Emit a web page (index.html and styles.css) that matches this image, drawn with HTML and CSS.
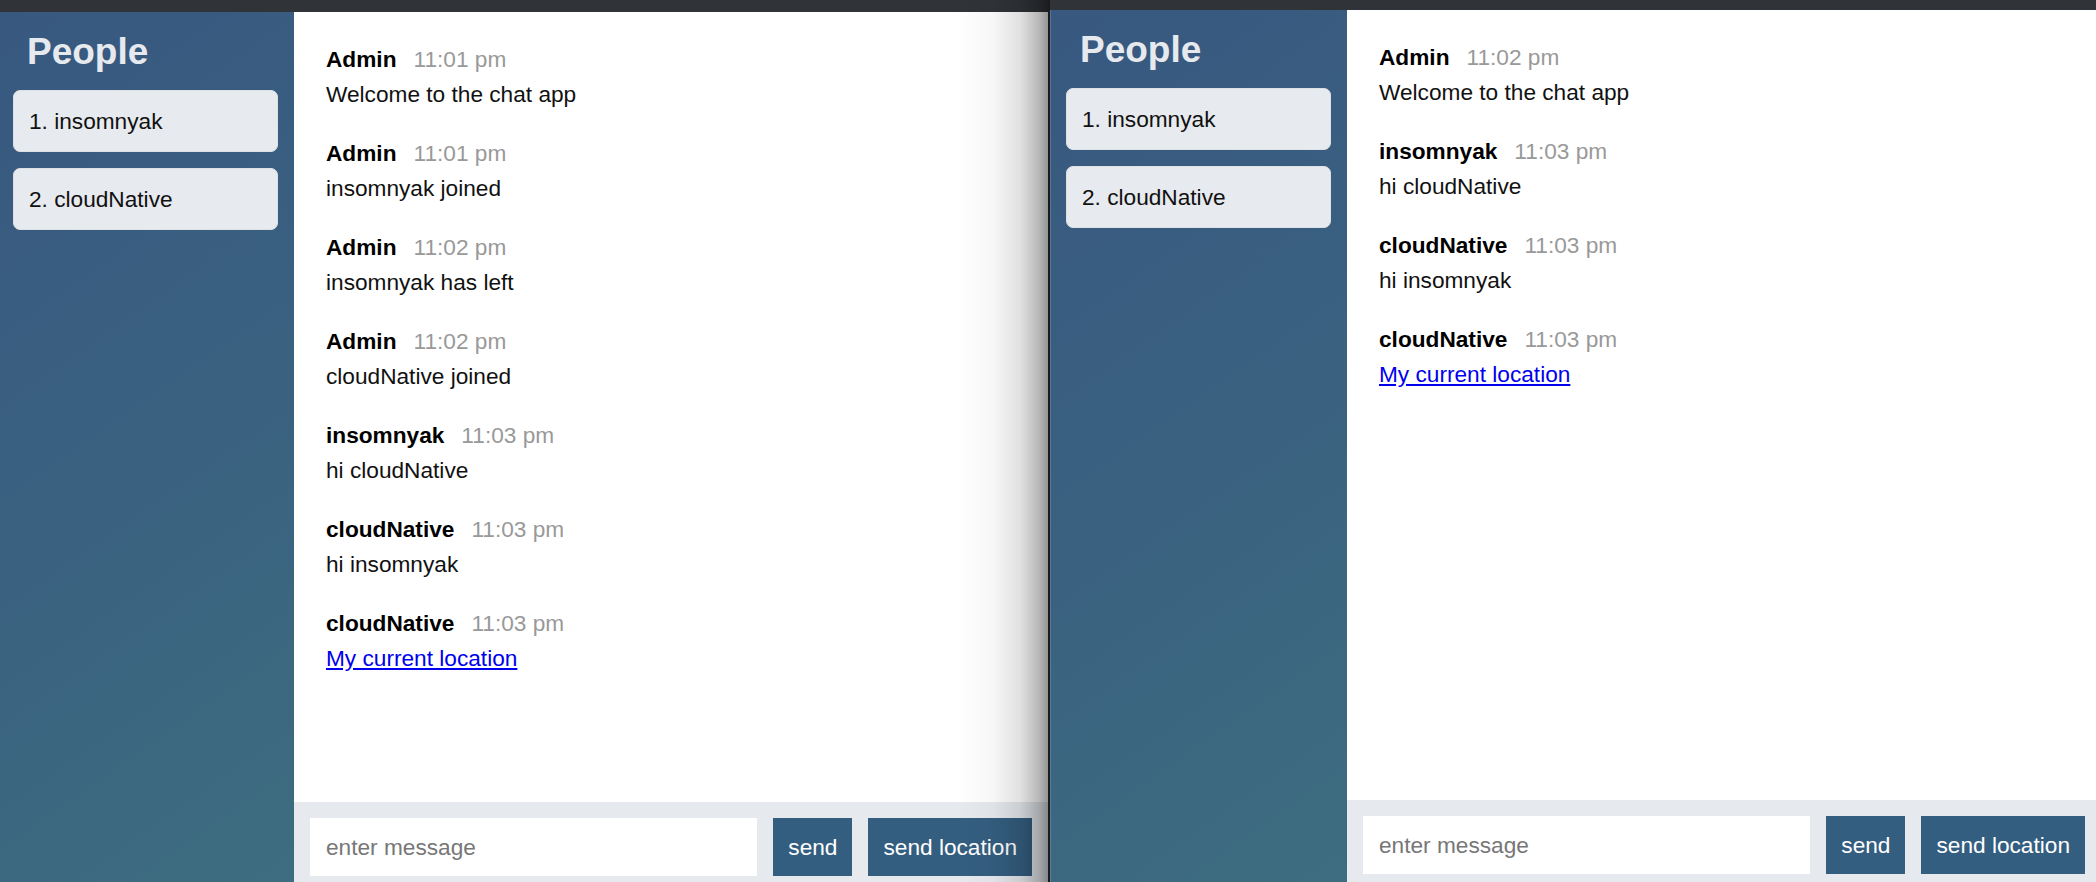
FILE: index.html
```html
<!DOCTYPE html>
<html lang="en">
<head>
<meta charset="utf-8">
<title>Chat</title>
<link rel="stylesheet" href="styles.css">
</head>
<body>
<div class="desktop">
  <div class="window window--left">
    <div class="chrome chrome--tall"></div>
    <div class="chat">
      <aside class="sidebar">
        <h3 class="sidebar__title">People</h3>
        <ul class="people">
          <li>1. insomnyak</li>
          <li>2. cloudNative</li>
        </ul>
      </aside>
      <main class="main">
        <div class="messages">
          <div class="message">
            <div class="message__title"><h4>Admin</h4><span>11:01 pm</span></div>
            <p>Welcome to the chat app</p>
          </div>
          <div class="message">
            <div class="message__title"><h4>Admin</h4><span>11:01 pm</span></div>
            <p>insomnyak joined</p>
          </div>
          <div class="message">
            <div class="message__title"><h4>Admin</h4><span>11:02 pm</span></div>
            <p>insomnyak has left</p>
          </div>
          <div class="message">
            <div class="message__title"><h4>Admin</h4><span>11:02 pm</span></div>
            <p>cloudNative joined</p>
          </div>
          <div class="message">
            <div class="message__title"><h4>insomnyak</h4><span>11:03 pm</span></div>
            <p>hi cloudNative</p>
          </div>
          <div class="message">
            <div class="message__title"><h4>cloudNative</h4><span>11:03 pm</span></div>
            <p>hi insomnyak</p>
          </div>
          <div class="message">
            <div class="message__title"><h4>cloudNative</h4><span>11:03 pm</span></div>
            <p><a href="#">My current location</a></p>
          </div>
        </div>
        <footer class="footer">
          <form class="footer__form">
            <input type="text" placeholder="enter message">
            <button type="button">send</button>
            <button type="button">send location</button>
          </form>
        </footer>
      </main>
    </div>
    <div class="shade"></div>
  </div>
  <div class="divider"></div>
  <div class="window window--right">
    <div class="chrome chrome--short"></div>
    <div class="chat">
      <aside class="sidebar sidebar--edge">
        <h3 class="sidebar__title">People</h3>
        <ul class="people">
          <li>1. insomnyak</li>
          <li>2. cloudNative</li>
        </ul>
      </aside>
      <main class="main">
        <div class="messages">
          <div class="message">
            <div class="message__title"><h4>Admin</h4><span>11:02 pm</span></div>
            <p>Welcome to the chat app</p>
          </div>
          <div class="message">
            <div class="message__title"><h4>insomnyak</h4><span>11:03 pm</span></div>
            <p>hi cloudNative</p>
          </div>
          <div class="message">
            <div class="message__title"><h4>cloudNative</h4><span>11:03 pm</span></div>
            <p>hi insomnyak</p>
          </div>
          <div class="message">
            <div class="message__title"><h4>cloudNative</h4><span>11:03 pm</span></div>
            <p><a href="#">My current location</a></p>
          </div>
        </div>
        <footer class="footer">
          <form class="footer__form">
            <input type="text" placeholder="enter message">
            <button type="button">send</button>
            <button type="button">send location</button>
          </form>
        </footer>
      </main>
    </div>
  </div>
</div>
</body>
</html>
```

FILE: styles.css
```css
html, body {
  margin: 0;
  padding: 0;
  height: 100%;
}

body {
  background: #1a1a1a;
  overflow: hidden;
  font-family: "Liberation Sans", Arial, sans-serif;
  font-size: 22.67px;
  color: #111;
}

.desktop {
  display: flex;
  width: 2096px;
  height: 882px;
  overflow: hidden;
}

.window {
  position: relative;
  flex: 0 0 1051px;
  width: 1051px;
  display: flex;
  flex-direction: column;
  height: 892px;
}

.window--left {
  margin-left: -3px;
}

.divider {
  flex: 0 0 2px;
  background: #1b1b1b;
}

.chrome {
  flex: 0 0 auto;
  background: #303338;
}

.chrome--tall {
  height: 12px;
}

.chrome--short {
  height: 10px;
}

.chat {
  display: flex;
  height: 880px;
  flex: 0 0 880px;
}

.sidebar {
  flex: 0 0 297px;
  width: 297px;
  background: linear-gradient(325deg, #3d6d80 0%, #3a6280 45%, #385880 100%);
  overflow: hidden;
}

.sidebar--edge {
  box-shadow: inset 1px 0 0 rgba(140, 170, 210, 0.35);
}

.sidebar__title {
  margin: 19px 0 18px 30px;
  font-size: 37px;
  line-height: 41px;
  font-weight: 700;
  color: #e6eaee;
}

.people {
  list-style: none;
  margin: 0;
  padding: 0;
}

.people li {
  background: #e7eaee;
  border: 1px solid #dde0e4;
  border-radius: 7px;
  padding: 16px 15px;
  margin: 16px;
  line-height: 28px;
  color: #111;
}

.main {
  flex: 1 1 auto;
  min-width: 0;
  display: flex;
  flex-direction: column;
  background: #fff;
}

.messages {
  flex: 1 1 auto;
  padding: 18px 16px 16px;
  overflow: hidden;
}

.message {
  padding: 16px;
}

.message__title {
  display: flex;
  align-items: baseline;
  margin-bottom: 8px;
  line-height: 27px;
}

.message__title h4 {
  margin: 0 17px 0 0;
  font-size: inherit;
  font-weight: 700;
  color: #000;
}

.message__title span {
  color: #999;
}

.message p {
  margin: 0;
  line-height: 27px;
  color: #111;
}

.message a {
  color: #0000ee;
  text-decoration: underline;
}

.footer {
  flex: 0 0 auto;
  display: flex;
  background: #e6eaee;
  padding: 16px;
}

.footer__form {
  display: flex;
  flex: 1 1 auto;
  margin: 0;
}

.footer__form input {
  flex: 1 1 auto;
  min-width: 0;
  height: 58px;
  border: none;
  padding: 0 16px;
  font: inherit;
  color: #111;
  background: #fff;
  outline: none;
  box-sizing: border-box;
}

.footer__form input::placeholder {
  color: #777;
}

.footer__form button {
  margin-left: 16px;
  height: 58px;
  padding: 0 15px;
  border: none;
  background: #345e80;
  color: #fff;
  font: inherit;
}

.shade {
  position: absolute;
  top: 0;
  right: 0;
  bottom: 0;
  width: 92px;
  pointer-events: none;
  background: linear-gradient(to right,
    rgba(0, 0, 0, 0) 0%,
    rgba(0, 0, 0, 0.03) 40%,
    rgba(0, 0, 0, 0.12) 70%,
    rgba(0, 0, 0, 0.28) 90%,
    rgba(0, 0, 0, 0.42) 100%);
}
```
